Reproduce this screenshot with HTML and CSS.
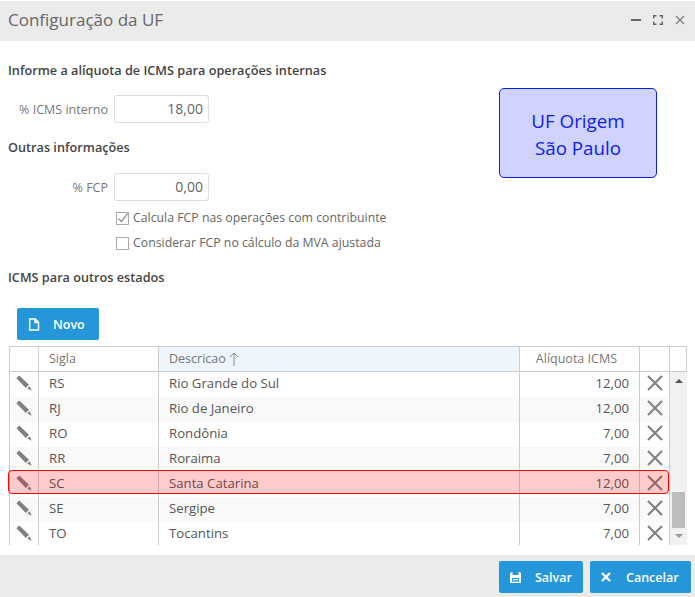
FILE: index.html
```html
<!DOCTYPE html>
<html lang="pt-BR">
<head>
<meta charset="utf-8">
<title>Configuração da UF</title>
<link rel="stylesheet" href="styles.css">
</head>
<body>
<svg class="defs" width="0" height="0" aria-hidden="true">
  <symbol id="pen" viewBox="0 0 16 16"><path d="M0.4 3.2 3.2 0.4 13 9.8 9.8 13z" fill="#808080"/><path d="M11.2 13.6 13.6 11.2 15.8 15.8z" fill="#808080"/></symbol>
  <symbol id="del" viewBox="0 0 16 16"><path d="M1 1 15 15M15 1 1 15" stroke="#808080" stroke-width="2.1" fill="none"/></symbol>
</svg>
<div class="dialog">
  <header class="titlebar">
    <h1 class="title">Configuração da UF</h1>
    <div class="winbtns">
      <svg width="10" height="10" viewBox="0 0 10 10"><rect y="4" width="10" height="2" fill="#666"/></svg>
      <svg width="10" height="10" viewBox="0 0 10 10"><path d="M0.7 3.5V.7H3.5M6.5.7H9.3V3.5M9.3 6.5V9.3H6.5M3.5 9.3H.7V6.5" fill="none" stroke="#666" stroke-width="1.4"/></svg>
      <svg width="10" height="10" viewBox="0 0 10 10"><path d="M1 1 9 9M9 1 1 9" fill="none" stroke="#777" stroke-width="1.1"/></svg>
    </div>
  </header>
  <main class="content">
    <div class="top">
      <div class="form">
        <h2 class="section first">Informe a alíquota de ICMS para operações internas</h2>
        <div class="field"><label class="flabel">% ICMS interno</label><div class="input">18,00</div></div>
        <h2 class="section second">Outras informações</h2>
        <div class="field fcp"><label class="flabel">% FCP</label><div class="input">0,00</div></div>
        <div class="check c1"><span class="box"><svg width="13" height="13" viewBox="0 0 13 13"><path d="M2.5 6.5 5.4 9.6 11.6 1.6" fill="none" stroke="#8a8a8a" stroke-width="1.3"/></svg></span>Calcula FCP nas operações com contribuinte</div>
        <div class="check c2"><span class="box"></span>Considerar FCP no cálculo da MVA ajustada</div>
      </div>
      <div class="origin">UF Origem<br>São Paulo</div>
    </div>
    <h2 class="section third">ICMS para outros estados</h2>
    <button class="btn novo"><svg width="12" height="13" viewBox="0 0 12 13"><path d="M1.7 1h5.6L10.5 4.2V12H1.7z M7 1V4.5H10.5" fill="none" stroke="#fff" stroke-width="1.5"/></svg>Novo</button>
    <div class="grid">
      <div class="row head">
        <div class="c cedit"></div><div class="c csigla">Sigla</div><div class="c cdesc sorted">Descricao<svg width="10" height="14" viewBox="0 0 10 14"><path d="M5 14V1M1 5 5 1 9 5" fill="none" stroke="#888" stroke-width="1"/></svg></div><div class="c cval">Alíquota ICMS</div><div class="c cdel"></div><div class="c cscroll"></div>
      </div>
      <div class="bodywrap">
        <div class="rows">
          <div class="row"><div class="c cedit"><svg class="ic"><use href="#pen"/></svg></div><div class="c csigla">RS</div><div class="c cdesc">Rio Grande do Sul</div><div class="c cval">12,00</div><div class="c cdel"><svg class="ic"><use href="#del"/></svg></div></div>
          <div class="row alt"><div class="c cedit"><svg class="ic"><use href="#pen"/></svg></div><div class="c csigla">RJ</div><div class="c cdesc">Rio de Janeiro</div><div class="c cval">12,00</div><div class="c cdel"><svg class="ic"><use href="#del"/></svg></div></div>
          <div class="row"><div class="c cedit"><svg class="ic"><use href="#pen"/></svg></div><div class="c csigla">RO</div><div class="c cdesc">Rondônia</div><div class="c cval">7,00</div><div class="c cdel"><svg class="ic"><use href="#del"/></svg></div></div>
          <div class="row alt"><div class="c cedit"><svg class="ic"><use href="#pen"/></svg></div><div class="c csigla">RR</div><div class="c cdesc">Roraima</div><div class="c cval">7,00</div><div class="c cdel"><svg class="ic"><use href="#del"/></svg></div></div>
          <div class="row"><div class="c cedit"><svg class="ic"><use href="#pen"/></svg></div><div class="c csigla">SC</div><div class="c cdesc">Santa Catarina</div><div class="c cval">12,00</div><div class="c cdel"><svg class="ic"><use href="#del"/></svg></div></div>
          <div class="row alt"><div class="c cedit"><svg class="ic"><use href="#pen"/></svg></div><div class="c csigla">SE</div><div class="c cdesc">Sergipe</div><div class="c cval">7,00</div><div class="c cdel"><svg class="ic"><use href="#del"/></svg></div></div>
          <div class="row"><div class="c cedit"><svg class="ic"><use href="#pen"/></svg></div><div class="c csigla">TO</div><div class="c cdesc">Tocantins</div><div class="c cval">7,00</div><div class="c cdel"><svg class="ic"><use href="#del"/></svg></div></div>
        </div>
        <div class="scrollbar">
          <span class="arrow up"></span>
          <span class="thumb"></span>
          <span class="arrow down"></span>
        </div>
      </div>
      <div class="highlight"></div>
    </div>
  </main>
  <footer class="footer">
    <button class="btn salvar"><svg width="13" height="13" viewBox="0 0 13 13"><path d="M1 2.5 2.5 1H11L12 2V12H1z" fill="#fff"/><rect x="3.5" y="1" width="6" height="3" fill="#2596d9"/><rect x="3" y="7" width="7" height="3.6" fill="#2596d9"/><rect x="4" y="8" width="5" height="1.2" fill="#fff"/></svg>Salvar</button>
    <button class="btn cancelar"><svg width="12" height="12" viewBox="0 0 12 12"><path d="M2 2 10 10M10 2 2 10" fill="none" stroke="#fff" stroke-width="2.4"/></svg>Cancelar</button>
  </footer>
</div>
</body>
</html>
```
FILE: styles.css
```css
* { box-sizing: border-box; }
html, body { margin: 0; padding: 0; }
body { font-family: "Open Sans", "Noto Sans", sans-serif; color: #555; background: #fff; }
.defs { display: block; height: 0; }
.dialog { width: 695px; height: 597px; display: flex; flex-direction: column; overflow: hidden; }

.titlebar { height: 41px; flex: none; background: #ebebeb; border-top: 1px solid #fff; display: flex; align-items: center; justify-content: space-between; padding: 0 10px 2px 8px; }
.title { margin: 0; font-size: 17px; font-weight: 400; color: #666; line-height: 24px; }
.winbtns { display: flex; gap: 12px; align-items: center; }

.content { flex: 1; position: relative; padding: 0 8px 0 8px; min-height: 0; }
.top { display: flex; }
.form { width: 491px; flex: none; }
.section { margin: 0; font-size: 12.7px; font-weight: 600; color: #444; line-height: 18px; }
.section.first { padding-top: 20px; }
.section.second { margin-top: 15px; }
.section.third { margin-top: 16px; }

.field { display: flex; align-items: center; margin-top: 16px; }
.flabel { width: 106px; padding-right: 6px; text-align: right; font-size: 12.5px; color: #777; }
.input { width: 95px; height: 28px; border: 1px solid #ddd; border-radius: 3px; text-align: right; padding: 0 5px; font-size: 14px; line-height: 26px; color: #666; background: #fff; }
.field.fcp { margin-top: 17px; }

.check { display: flex; align-items: center; margin-left: 108px; font-size: 12.3px; color: #666; line-height: 18px; }
.check.c1 { margin-top: 8px; }
.check.c2 { margin-top: 7px; }
.box { width: 13px; height: 13px; border: 1px solid #aaa; background: #fff; margin-right: 4px; flex: none; position: relative; display: block; }
.box svg { display: block; margin: -1px; }

.origin { width: 158px; height: 90px; margin-top: 47px; background: #d0d3ff; border: 1px solid #0b1cf0; border-radius: 5px; color: #0b1cf0; font-size: 18.8px; line-height: 27px; text-align: center; padding-top: 19px; }

.btn { border: 0; border-radius: 2px; background: #2596d9; color: #fff; font-family: inherit; font-weight: 600; font-size: 12.5px; display: flex; align-items: center; padding: 0; cursor: pointer; }
.novo { width: 82px; height: 32px; margin: 22px 0 6px 9px; padding-left: 11px; gap: 13px; }

.grid { position: relative; width: 678px; margin-left: 1px; height: 199px; }
.row { display: flex; height: 25px; font-size: 13.2px; color: #555; line-height: 22px; background: #fff; }
.row.alt { background: #f9f9f9; }
.c { flex: none; height: 100%; border-right: 1px solid #ccc; padding: 0 10px; white-space: nowrap; }
.cedit { width: 30px; padding: 3px 0 0; display: flex; align-items: flex-start; justify-content: center; border-left: 1px solid #ccc; }
.csigla { width: 120px; }
.cdesc { width: 361px; }
.cval { width: 120px; text-align: right; padding-right: 10px; }
.cdel { width: 30px; padding: 3px 0 0; display: flex; align-items: flex-start; justify-content: center; }
.cscroll { width: 17px; padding: 0; }
.ic { width: 16px; height: 16px; display: block; }
.row.head { height: 26px; line-height: 24px; font-size: 12.5px; border-top: 1px solid #ccc; border-bottom: 1px solid #ccc; color: #777; }
.head .cval { padding-right: 22px; }
.sorted { background: #eef5fb; display: flex; align-items: center; gap: 3px; }
.bodywrap { display: flex; height: 173px; overflow: hidden; }
.rows { width: 661px; flex: none; }
.scrollbar { width: 17px; background: #f1f1f1; position: relative; display: flex; flex-direction: column; align-items: center; }
.thumb { position: absolute; top: 120px; left: 2px; width: 13px; height: 36px; background: #bdbdbd; }
.arrow { position: absolute; left: 5px; width: 0; height: 0; border-left: 4px solid transparent; border-right: 4px solid transparent; }
.arrow.up { top: 7px; border-bottom: 4px solid #555; }
.arrow.down { top: 162px; border-top: 4px solid #999; }
.highlight { position: absolute; left: -1px; top: 124px; width: 661px; height: 24px; background: rgba(255, 0, 0, .2); border: 1px solid #f00; border-radius: 4px; }

.footer { height: 42px; flex: none; background: #ebebeb; display: flex; justify-content: flex-end; gap: 7px; padding: 6px 4px 3px 0; }
.salvar { width: 84px; height: 32px; padding-left: 10px; gap: 13px; }
.cancelar { width: 101px; height: 32px; padding-left: 10px; gap: 14px; }
```
